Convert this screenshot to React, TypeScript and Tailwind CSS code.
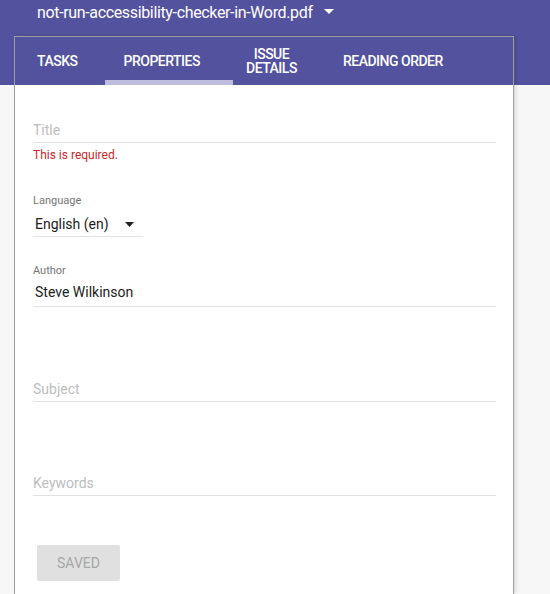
import React from 'react';

const tabs = ['TASKS', 'PROPERTIES', 'ISSUE DETAILS', 'READING ORDER'];

function Field({ label, value, placeholder }: { label?: string; value?: string; placeholder?: string }) {
    return (
        <div>
            {label && <div className="text-[11px] leading-[14px] text-[#757575]">{label}</div>}
            <div className={`text-[14px] leading-[20px] pb-[2px] border-b border-[#e0e0e0] ${label ? 'mt-[4px]' : ''}`}>
                {value ? <span className="text-[#212121]">{value}</span> : <span className="text-[#bdbdbd]">{placeholder}</span>}
            </div>
        </div>
    );
}

export default function App() {
    return (
        <div className="h-[594px] overflow-hidden flex flex-col bg-[linear-gradient(to_bottom,#52529e_85px,#f7f7f7_85px)] font-['Roboto',sans-serif]">
            {/* File header */}
            <div className="h-[36px] shrink-0 pl-[37px] flex items-start pt-[3px]">
                <span className="text-[16px] tracking-[-0.35px] leading-[20px] text-white">not-run-accessibility-checker-in-Word.pdf</span>
                <svg className="ml-[11px] mt-[6px]" width="10" height="5" viewBox="0 0 10 5">
                    <path d="M0 0h10L5 5z" fill="#fff" />
                </svg>
            </div>

            {/* Panel */}
            <div className="ml-[14px] w-[500px] flex-1 flex flex-col border border-b-0 border-[#9e9e9e] shadow-[2px_0_4px_rgba(0,0,0,0.12)]">
                <div className="relative h-[48px] shrink-0 bg-[#52529e] flex items-center pl-[22px] gap-[46px]">
                    {tabs.map((t) => (
                        <div
                            key={t}
                            className={`text-white text-[14px] tracking-[-0.5px] font-medium text-center leading-[14px] ${t === 'ISSUE DETAILS' ? 'w-[51px]' : ''}`}
                        >
                            {t}
                        </div>
                    ))}
                    <div className="absolute bottom-0 left-[90px] w-[128px] h-[5px] bg-[#bcbcdc]" />
                </div>

                <div className="flex-1 bg-white pl-[18px] pr-[17px] pt-[35px]">
                    <Field placeholder="Title" />
                    <div className="mt-[4px] text-[12px] leading-[16px] text-[#c62828]">This is required.</div>

                    <div className="mt-[31px] w-[110px]">
                        <div className="text-[11px] leading-[14px] text-[#757575]">Language</div>
                        <div className="mt-[6px] flex items-center pl-[2px] pr-[9px] text-[14px] leading-[20px] pb-[2px] border-b border-[#e0e0e0] text-[#212121]">
                            <span className="flex-1">English (en)</span>
                            <svg width="9" height="5" viewBox="0 0 9 5">
                                <path d="M0 0h9L4.5 5z" fill="#212121" />
                            </svg>
                        </div>
                    </div>

                    <div className="mt-[27px]">
                        <div className="text-[11px] leading-[14px] text-[#757575]">Author</div>
                        <div className="mt-[4px] pl-[2px] text-[14px] leading-[20px] pb-[4px] border-b border-[#e0e0e0] text-[#212121]">
                            Steve Wilkinson
                        </div>
                    </div>

                    <div className="mt-[72px]">
                        <Field placeholder="Subject" />
                    </div>
                    <div className="mt-[71px]">
                        <Field placeholder="Keywords" />
                    </div>

                    <button
                        disabled
                        className="mt-[49px] ml-[4px] w-[83px] h-[36px] rounded-[2px] bg-[#e0e0e0] text-[#a6a6a6] text-[14px]"
                    >
                        SAVED
                    </button>
                </div>
            </div>
        </div>
    );
}
